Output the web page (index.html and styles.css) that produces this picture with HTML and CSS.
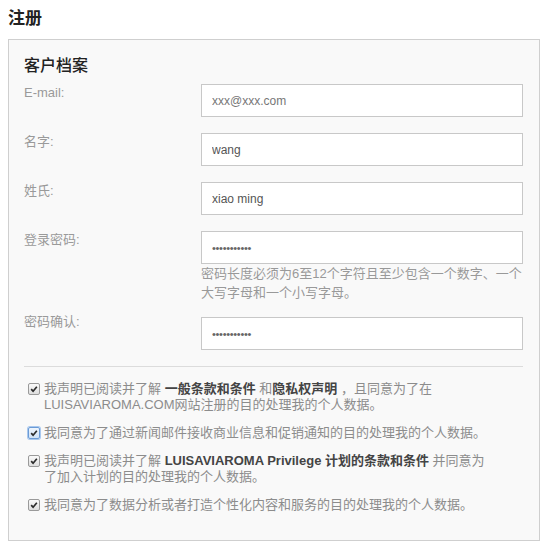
FILE: index.html
```html
<!DOCTYPE html>
<html lang="zh-CN">
<head>
<meta charset="utf-8">
<title>注册</title>
<link rel="stylesheet" href="styles.css">
</head>
<body>
<div class="page">
  <h1 class="title">注册</h1>
  <section class="panel">
    <h2 class="panel-title">客户档案</h2>
    <div class="field">
      <label class="label">E-mail:</label>
      <div class="control"><input class="input muted" type="text" value="xxx@xxx.com" readonly></div>
    </div>
    <div class="field">
      <label class="label">名字:</label>
      <div class="control"><input class="input" type="text" value="wang" readonly></div>
    </div>
    <div class="field">
      <label class="label">姓氏:</label>
      <div class="control"><input class="input" type="text" value="xiao ming" readonly></div>
    </div>
    <div class="field field-pw">
      <label class="label">登录密码:</label>
      <div class="control">
        <input class="input pw" type="password" value="abcdefghijk" readonly>
        <p class="help">密码长度必须为6至12个字符且至少包含一个数字、一个大写字母和一个小写字母。</p>
      </div>
    </div>
    <div class="field">
      <label class="label label-raised">密码确认:</label>
      <div class="control"><input class="input pw" type="password" value="abcdefghijk" readonly></div>
    </div>
    <hr class="divider">
    <ul class="consents">
      <li class="consent">
        <span class="check"><svg viewBox="0 0 12 12" width="12" height="12"><path d="M2.6 6.2 L4.9 8.6 L9.4 3.2" fill="none" stroke="#2b2b2b" stroke-width="2"/></svg></span>
        <span class="consent-text">我声明已阅读并了解 <b>一般条款和条件</b> 和<b>隐私权声明</b> ，且同意为了在LUISAVIAROMA.COM网站注册的目的处理我的个人数据。</span>
      </li>
      <li class="consent">
        <span class="check focus"><svg viewBox="0 0 12 12" width="12" height="12"><path d="M2.6 6.2 L4.9 8.6 L9.4 3.2" fill="none" stroke="#2b2b2b" stroke-width="2"/></svg></span>
        <span class="consent-text">我同意为了通过新闻邮件接收商业信息和促销通知的目的处理我的个人数据。</span>
      </li>
      <li class="consent">
        <span class="check"><svg viewBox="0 0 12 12" width="12" height="12"><path d="M2.6 6.2 L4.9 8.6 L9.4 3.2" fill="none" stroke="#2b2b2b" stroke-width="2"/></svg></span>
        <span class="consent-text narrow">我声明已阅读并了解 <b>LUISAVIAROMA Privilege 计划的条款和条件</b> 并同意为了加入计划的目的处理我的个人数据。</span>
      </li>
      <li class="consent">
        <span class="check"><svg viewBox="0 0 12 12" width="12" height="12"><path d="M2.6 6.2 L4.9 8.6 L9.4 3.2" fill="none" stroke="#2b2b2b" stroke-width="2"/></svg></span>
        <span class="consent-text">我同意为了数据分析或者打造个性化内容和服务的目的处理我的个人数据。</span>
      </li>
    </ul>
  </section>
</div>
</body>
</html>
```
FILE: styles.css
```css
* { box-sizing: border-box; }
html, body { margin: 0; padding: 0; background: #fff; }
body {
  font-family: "Liberation Sans", "Noto Sans CJK SC", sans-serif;
  font-size: 13px;
  color: #333;
}
.page { padding: 8px 8px 0; }
.title {
  margin: 0 0 9px;
  font-size: 17px;
  line-height: 22px;
  font-weight: 700;
  color: #222;
}
.panel {
  background: #f9f9f9;
  border: 1px solid #cfcfcf;
  padding: 15px 16px 27px 15px;
}
.panel-title {
  margin: 0 0 7px;
  font-size: 16px;
  line-height: 22px;
  font-weight: 500;
  color: #222;
}
.field {
  display: grid;
  grid-template-columns: 177px 1fr;
  margin-bottom: 16px;
}
.field-pw { margin-bottom: 15px; }
.label {
  color: #9a9a9a;
  font-size: 13px;
  line-height: 18px;
}
.label-raised { margin-top: -4px; }
.input {
  display: block;
  width: 100%;
  height: 33px;
  margin: 0;
  border: 1px solid #c8c8c8;
  background: #fff;
  padding: 0 10px;
  font-family: "Liberation Sans", "Noto Sans CJK SC", sans-serif;
  font-size: 12px;
  color: #555;
  outline: none;
}
.input.muted { color: #777; }
.input.pw { font-size: 11px; color: #666; letter-spacing: -0.3px; }
.help {
  margin: 0;
  font-size: 13px;
  line-height: 19px;
  color: #999;
}
.divider {
  border: 0;
  border-top: 1px solid #dcdcdc;
  margin: 15px 0 14px;
  height: 0;
}
.consents {
  list-style: none;
  margin: 0;
  padding: 0 0 0 4px;
  display: flex;
  flex-direction: column;
  gap: 12px;
}
.consent {
  display: flex;
  align-items: flex-start;
  gap: 4px;
  font-size: 13px;
  line-height: 16px;
  color: #8c8c8c;
}
.consent b { color: #444; font-weight: 700; }
.check {
  flex: none;
  width: 12px;
  height: 12px;
  margin-top: 2px;
  border: 1px solid #9a9a9a;
  border-radius: 2px;
  background: linear-gradient(#fafafa, #dedede);
  display: flex;
  align-items: center;
  justify-content: center;
}
.check svg { display: block; width: 10px; height: 10px; }
.check.focus {
  border-color: #6b9bd6;
  background: linear-gradient(#eef5fd, #cfe2f7);
  box-shadow: 0 0 0 1px #a9c8ee;
}
.consent-text { flex: 1; }
.consent-text.narrow { flex: 0 1 448px; }
```
